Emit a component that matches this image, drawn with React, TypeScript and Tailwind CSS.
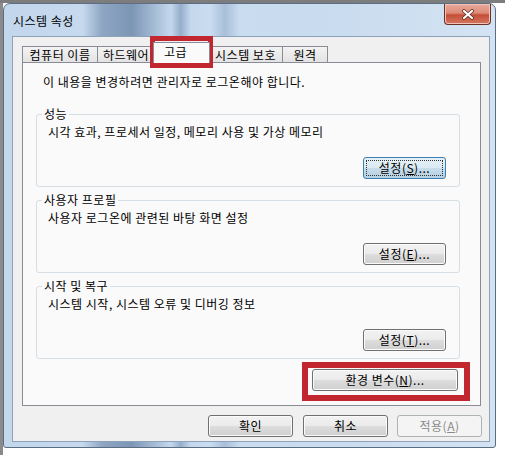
import React from "react";

type BtnProps = {
  children: React.ReactNode;
  className?: string;
  variant?: "normal" | "focus" | "disabled";
};

const WinButton = ({ children, className = "", variant = "normal" }: BtnProps) => {
  if (variant === "focus") {
    return (
      <div
        className={`h-[22px] rounded-[3px] border border-[#3c7fb1] bg-[linear-gradient(#e6f1f8_0%,#dbeaf3_48%,#c6dceb_52%,#b5d0e2_100%)] p-[2px] ${className}`}
      >
        <div className="h-full w-full border border-dotted border-[#333] flex items-center justify-center text-[12px] leading-none">
          {children}
        </div>
      </div>
    );
  }
  if (variant === "disabled") {
    return (
      <div
        className={`h-[22px] rounded-[3px] border border-[#adb2b5] bg-[#f4f4f4] flex items-center justify-center text-[12px] leading-none text-[#8a8a8a] ${className}`}
      >
        {children}
      </div>
    );
  }
  return (
    <div
      className={`h-[22px] rounded-[3px] border border-[#707070] bg-[linear-gradient(#f2f2f2_0%,#ebebeb_48%,#dddddd_52%,#cfcfcf_100%)] shadow-[inset_0_0_0_1px_#fbfbfb] flex items-center justify-center text-[12px] leading-none ${className}`}
    >
      {children}
    </div>
  );
};

const Group = ({
  label,
  text,
  button,
  className = "",
}: {
  label: string;
  text: string;
  button: React.ReactNode;
  className?: string;
}) => (
  <fieldset
    className={`h-[81px] ml-[13px] mr-[20px] rounded-[3px] border border-[#d5dfe5] ${className}`}
  >
    <legend className="ml-[5px] px-[2px] text-[12px] leading-[16px]">{label}</legend>
    <div className="mt-[2px] pl-[11px] text-[12px] leading-[16px]">{text}</div>
    <div className="mt-[17px] flex justify-end pr-[13px]">{button}</div>
  </fieldset>
);

const Tab = ({ label, className = "" }: { label: string; className?: string }) => (
  <div
    className={`h-[16px] border border-b-0 border-[#898c95] bg-[linear-gradient(#f3f3f3,#e3e3e3)] flex items-center justify-center text-[12px] leading-none ${className}`}
  >
    {label}
  </div>
);

export default function App() {
  return (
    <div className="relative w-[505px] h-[455px] overflow-hidden bg-white text-black tracking-[0.5px] font-['Noto_Sans_CJK_KR','Noto_Sans',sans-serif]">
      <div className="h-[3px] bg-[#7d7d7d]" />
      <div className="flex">
        <div className="w-[3px] h-[452px] bg-[#8a8a8a]" />
        {/* window */}
        <div className="w-[493px] h-[445px] flex flex-col border border-[#5b6d80] rounded-t-[7px] rounded-b-[3px] bg-[linear-gradient(90deg,#c2d6ec_0%,#c6d9ee_16%,#8ea6c3_20%,#7c96b6_26%,#a9bfd8_31%,#c4d8ed_34%,#95aecb_36%,#c4d8ed_38%,#c9dcf0_42%,#a8bfd9_45%,#c9dcf0_48%,#cadcef_70%,#d3e3f3_100%)]">
          {/* title bar */}
          <div className="h-[32px] flex items-start justify-between pl-[9px] pr-[4px]">
            <div className="pt-[9px] text-[12px] leading-[16px]">시스템 속성</div>
            <div className="w-[47px] h-[21px] rounded-b-[4px] border border-t-0 border-[#6e3026] bg-[linear-gradient(#e8ab9c_0%,#dd8a77_45%,#c44f38_55%,#d47760_100%)] shadow-[inset_0_0_0_1px_#f0c4b8] flex items-center justify-center">
              <svg width="14" height="11" viewBox="0 0 14 11">
                <path d="M3 2 L11 9 M11 2 L3 9" stroke="#5a2a22" strokeWidth="3.6" strokeLinecap="round" />
                <path d="M3 2 L11 9 M11 2 L3 9" stroke="#ffffff" strokeWidth="2.2" strokeLinecap="round" />
              </svg>
            </div>
          </div>
          {/* client */}
          <div className="ml-[8px] mr-[5px] h-[406px] border border-[#8ea3b9] bg-[#f0f0f0] flex flex-col">
            {/* tabs */}
            <div className="mt-[5px] ml-[9px] h-[20px] flex items-end">
              <Tab label="컴퓨터 이름" className="w-[76px]" />
              <Tab label="하드웨어" className="w-[58px] -ml-px" />
              <div className="relative z-10 -ml-[2px] -mb-px w-[57px] h-[21px] border border-b-0 border-[#898c95] bg-[#fafafa] pl-[10px] pt-px text-[12px] leading-[16px]">
                고급
              </div>
              <Tab label="시스템 보호" className="w-[75px] -ml-[2px]" />
              <Tab label="원격" className="w-[46px] -ml-px" />
            </div>
            {/* tab page */}
            <div className="ml-[9px] w-[459px] h-[344px] border border-[#898c95] bg-[#fafafa] flex flex-col">
              <div className="pt-[11px] pl-[20px] text-[12px] leading-[16px]">
                이 내용을 변경하려면 관리자로 로그온해야 합니다.
              </div>
              <Group
                className="mt-[16px]"
                label="성능"
                text="시각 효과, 프로세서 일정, 메모리 사용 및 가상 메모리"
                button={
                  <WinButton variant="focus" className="w-[83px]">
                    설정(<span className="underline">S</span>)...
                  </WinButton>
                }
              />
              <Group
                className="mt-[5px]"
                label="사용자 프로필"
                text="사용자 로그온에 관련된 바탕 화면 설정"
                button={
                  <WinButton className="w-[83px]">
                    설정(<span className="underline">E</span>)...
                  </WinButton>
                }
              />
              <Group
                className="mt-[5px]"
                label="시작 및 복구"
                text="시스템 시작, 시스템 오류 및 디버깅 정보"
                button={
                  <WinButton className="w-[83px]">
                    설정(<span className="underline">T</span>)...
                  </WinButton>
                }
              />
              <div className="mt-[10px] flex justify-end pr-[22px]">
                <WinButton className="w-[146px]">
                  환경 변수(<span className="underline">N</span>)...
                </WinButton>
              </div>
            </div>
            {/* dialog buttons */}
            <div className="mt-[9px] flex justify-end pr-[7px]">
              <WinButton className="w-[85px]">확인</WinButton>
              <WinButton className="w-[85px] ml-[10px]">취소</WinButton>
              <WinButton variant="disabled" className="w-[85px] ml-[9px]">
                적용(<span className="underline">A</span>)
              </WinButton>
            </div>
          </div>
        </div>
      </div>

      {/* red annotation boxes */}
      <div className="absolute left-[150px] top-[36px] w-[63px] h-[32px] border-[5px] border-[#c2262e]" />
      <div className="absolute left-[302px] top-[362px] w-[168px] h-[39px] border-[6px] border-[#c2262e]" />
    </div>
  );
}
